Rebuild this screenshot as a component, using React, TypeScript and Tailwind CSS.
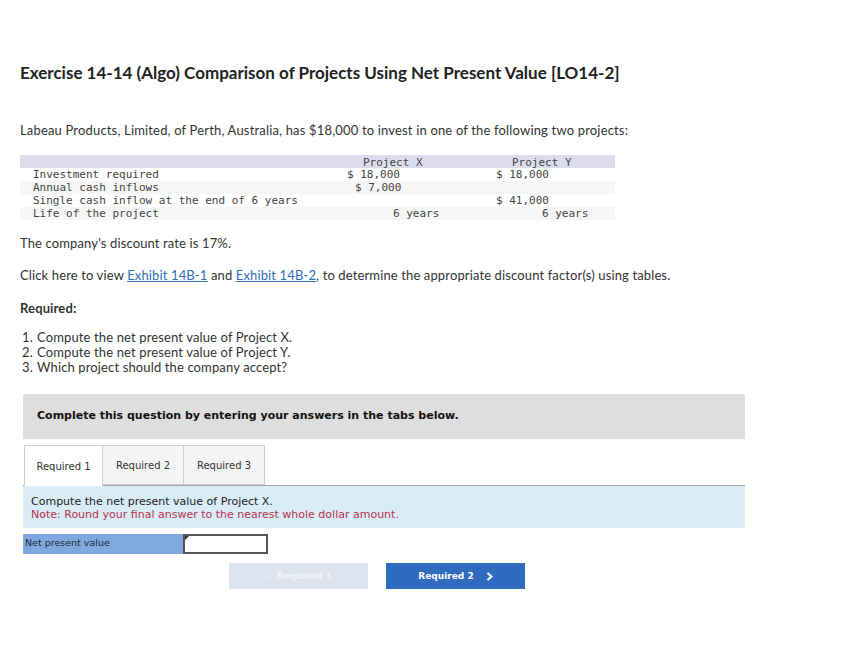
const sans = "font-['Lato','Open_Sans',sans-serif]"
const verdana = "font-['DejaVu_Sans','Liberation_Sans',sans-serif]"

const rows = [
  { label: 'Investment required', x: '$ 18,000', xPad: 'pl-[7px]', y: '$ 18,000', yPad: 'pl-[16px]' },
  { label: 'Annual cash inflows', x: '$ 7,000', xPad: 'pl-[15px]', y: '', yPad: '' },
  { label: 'Single cash inflow at the end of 6 years', x: '', xPad: '', y: '$ 41,000', yPad: 'pl-[16px]' },
  { label: 'Life of the project', x: '6 years', xPad: 'pl-[53px]', y: '6 years', yPad: 'pl-[62px]' },
]

function DataTable() {
  return (
    <div className="mt-[16px] w-[595px] font-['DejaVu_Sans_Mono','Liberation_Mono',monospace] text-[11px] leading-[13px] text-[#444]">
      <div className="grid h-[13px] grid-cols-[320px_140px_135px] bg-[#dcdcee]">
        <div />
        <div className="pl-[23px] leading-[15px]">Project X</div>
        <div className="pl-[32px] leading-[15px]">Project Y</div>
      </div>
      {rows.map((r, i) => (
        <div
          key={r.label}
          className={`grid h-[13px] grid-cols-[320px_140px_135px] ${i % 2 === 1 ? 'bg-[#f6f6f6]' : 'bg-white'}`}
        >
          <div className="pl-[13px]">{r.label}</div>
          <div className={r.xPad}>{r.x}</div>
          <div className={r.yPad}>{r.y}</div>
        </div>
      ))}
    </div>
  )
}

export default function App() {
  return (
    <div className={`min-h-[671px] w-[846px] bg-white pl-[20px] pt-[62px] text-[#333] ${sans}`}>
      <h1 className="h-[22px] text-[17px] font-bold leading-[22px] text-[#222]">
        Exercise 14-14 (Algo) Comparison of Projects Using Net Present Value [LO14-2]
      </h1>

      <div className="tracking-[0.17px]">
        <p className="mt-[37px] h-[18px] text-[13px] leading-[18px]">
          Labeau Products, Limited, of Perth, Australia, has $18,000 to invest in one of the following two projects:
        </p>
      </div>

      <DataTable />

      <div className="tracking-[0.13px]">
        <p className="mt-[14px] h-[18px] text-[13px] leading-[18px]">The company's discount rate is 17%.</p>

        <p className="mt-[14px] h-[18px] text-[13px] leading-[18px]">
          Click here to view{' '}
          <span className="text-[#2f6db5] underline">Exhibit 14B-1</span> and{' '}
          <span className="text-[#2f6db5] underline">Exhibit 14B-2</span>, to determine the appropriate discount factor(s)
          using tables.
        </p>

        <p className="mt-[15px] h-[18px] text-[13px] font-bold leading-[18px]">Required:</p>

        <ol className="mt-[13px] text-[13px] leading-[15px]">
          <li className="flex"><span className="w-[17px] pl-[2px]">1.</span>Compute the net present value of Project X.</li>
          <li className="flex"><span className="w-[17px] pl-[2px]">2.</span>Compute the net present value of Project Y.</li>
          <li className="flex"><span className="w-[17px] pl-[2px]">3.</span>Which project should the company accept?</li>
        </ol>
      </div>

      <div className={`ml-[3px] mt-[19px] flex h-[45px] w-[722px] items-center bg-[#dedede] pl-[14px] ${verdana}`}>
        <span className="text-[11px] font-bold text-[#111]">
          Complete this question by entering your answers in the tabs below.
        </span>
      </div>

      <div className={`ml-[3px] w-[722px] ${verdana}`}>
        <div className="mt-[6px] flex h-[41px] items-end border-b border-[#9aa7b0]">
          <div className="-mb-px ml-px flex h-[41px] w-[79px] items-center justify-center border border-b-0 border-[#cfcfcf] bg-white text-[10px] text-[#333]">
            Required 1
          </div>
          <div className="flex h-[40px] w-[81px] items-center justify-center border border-l-0 border-[#cfcfcf] bg-[#f4f4f4] text-[10px] text-[#333]">
            Required 2
          </div>
          <div className="flex h-[40px] w-[81px] items-center justify-center border border-l-0 border-[#cfcfcf] bg-[#f4f4f4] text-[10px] text-[#333]">
            Required 3
          </div>
        </div>

        <div className="h-[42px] bg-[#d8edf8] pl-[8px] pt-[9px] text-[11px] leading-[13px]">
          <div className="text-[#222]">Compute the net present value of Project X.</div>
          <div className="text-[#b8324b]">Note: Round your final answer to the nearest whole dollar amount.</div>
        </div>

        <div className="mt-[6px] flex h-[20px]">
          <div className="w-[160px] bg-[#7fa9de] pl-[2px] pt-[2px] text-[9.5px] leading-[14px] text-[#1d2a3a]">Net present value</div>
          <div className="relative h-[20px] w-[85px] border-2 border-[#555] bg-white">
            <div className="absolute left-0 top-0 h-0 w-0 border-r-[4px] border-t-[4px] border-r-transparent border-t-[#333]" />
          </div>
        </div>

        <div className="mt-[9px] flex h-[26px] pl-[206px]">
          <div className="flex w-[139px] items-center justify-center gap-[8px] bg-[#dde4f0] pt-px text-[9px] font-bold text-[#f1f4f9]">
            <span>&lsaquo;</span>
            <span>Required 1</span>
          </div>
          <div className="ml-[18px] flex w-[139px] items-center justify-center gap-[12px] bg-[#2f6cc0] pt-px text-[9px] font-bold text-white">
            <span>Required 2</span>
            <svg width="7" height="9" viewBox="0 0 7 9" fill="none">
              <path d="M1.5 1l4 3.5-4 3.5" stroke="white" strokeWidth="2" />
            </svg>
          </div>
        </div>
      </div>
    </div>
  )
}
